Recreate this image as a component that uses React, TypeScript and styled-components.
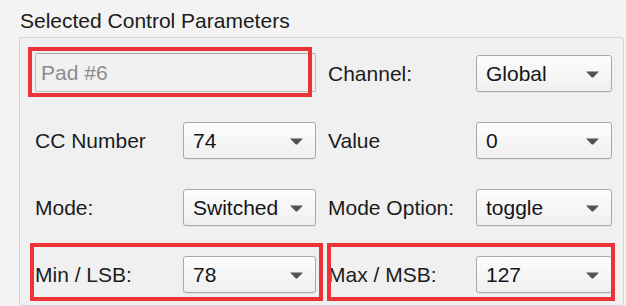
import React from 'react';
import styled, { createGlobalStyle } from 'styled-components';

const GlobalStyle = createGlobalStyle`
  html, body {
    margin: 0;
    padding: 0;
    background: #f3f3f3;
    overflow: hidden;
  }
  body {
    font-family: "Liberation Sans", Arial, sans-serif;
  }
`;

const Page = styled.div`
  width: 626px;
  height: 306px;
  padding: 9px 0 0 19px;
  box-sizing: border-box;
  overflow: hidden;
`;

const Title = styled.div`
  margin-left: 1px;
  font-size: 21px;
  line-height: 24px;
  color: #1a1a1a;
`;

const GroupBox = styled.div`
  margin-top: 4px;
  width: 605px;
  box-sizing: border-box;
  border: 1px solid #d6d6d6;
  border-radius: 2px;
  background: #f0f0f0;
  padding: 17px 11px 12px 15px;
  display: flex;
  flex-direction: column;
  gap: 30px;
`;

const Row = styled.div`
  display: flex;
  height: 37px;
`;

const Pair = styled.div<{ $right?: boolean }>`
  position: relative;
  display: flex;
  align-items: center;
  padding-left: ${(p) => (p.$right ? '12px' : '0')};
`;

const Label = styled.div`
  width: 148px;
  font-size: 21px;
  color: #1c1c1c;
  white-space: nowrap;
`;

const Select = styled.div<{ $width: number }>`
  position: relative;
  width: ${(p) => p.$width}px;
  height: 37px;
  box-sizing: border-box;
  border: 1px solid #a9a9a9;
  border-radius: 3px;
  background: linear-gradient(#fdfdfd, #efefef);
  box-shadow: 0 1px 1px rgba(0, 0, 0, 0.06);
  display: flex;
  align-items: center;
  padding-left: 9px;
  font-size: 21px;
  color: #151515;
`;

const Arrow = styled.svg`
  position: absolute;
  right: 12px;
  top: 50%;
  margin-top: -3px;
`;

const TextField = styled.div`
  width: 281px;
  height: 39px;
  margin-top: -2px;
  box-sizing: border-box;
  border: 1px solid #bdbdbd;
  border-top-color: #a8a8a8;
  border-radius: 2px;
  background: #f1f1f1;
  display: flex;
  align-items: center;
  padding-left: 5px;
  font-size: 21px;
  color: #8c8c8c;
`;

const Highlight = styled.div<{ $t: number; $r: number; $b: number; $l: number }>`
  position: absolute;
  top: ${(p) => p.$t}px;
  right: ${(p) => p.$r}px;
  bottom: ${(p) => p.$b}px;
  left: ${(p) => p.$l}px;
  border: 4px solid #ec3338;
  pointer-events: none;
`;

const Dropdown = ({ value, width }: { value: string; width: number }) => (
  <Select $width={width}>
    {value}
    <Arrow width="13" height="7" viewBox="0 0 13 7">
      <path d="M0 0.5 H13 L7.2 6.5 H5.8 Z" fill="#525252" />
    </Arrow>
  </Select>
);

const Field = ({
  label,
  value,
  right,
}: {
  label: string;
  value: string;
  right?: boolean;
}) => (
  <>
    <Label>{label}</Label>
    <Dropdown value={value} width={right ? 136 : 133} />
  </>
);

export default function App() {
  return (
    <>
      <GlobalStyle />
      <Page>
        <Title>Selected Control Parameters</Title>
        <GroupBox>
          <Row>
            <Pair>
              <TextField>Pad #6</TextField>
              <Highlight $t={-8} $r={4} $b={-5} $l={-7} />
            </Pair>
            <Pair $right>
              <Field label="Channel:" value="Global" right />
            </Pair>
          </Row>
          <Row>
            <Pair>
              <Field label="CC Number" value="74" />
            </Pair>
            <Pair $right>
              <Field label="Value" value="0" right />
            </Pair>
          </Row>
          <Row>
            <Pair>
              <Field label="Mode:" value="Switched" />
            </Pair>
            <Pair $right>
              <Field label="Mode Option:" value="toggle" right />
            </Pair>
          </Row>
          <Row>
            <Pair>
              <Field label="Min / LSB:" value="78" />
              <Highlight $t={-13} $r={-7} $b={-8} $l={-5} />
            </Pair>
            <Pair $right>
              <Field label="Max / MSB:" value="127" right />
              <Highlight $t={-13} $r={-3} $b={-8} $l={11} />
            </Pair>
          </Row>
        </GroupBox>
      </Page>
    </>
  );
}
